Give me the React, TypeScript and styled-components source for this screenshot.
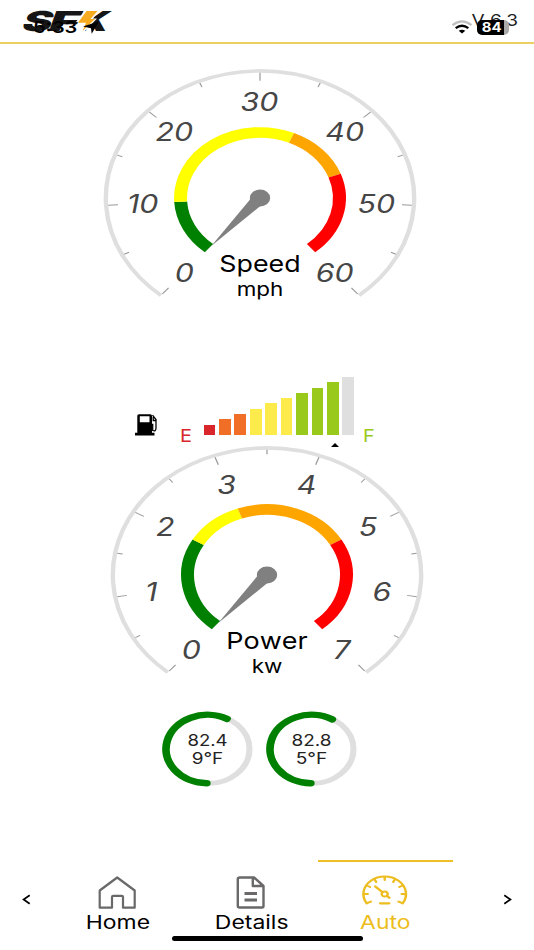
import React from 'react';
import styled, { createGlobalStyle } from 'styled-components';

const STRETCH = 1.213;

const GlobalStyle = createGlobalStyle`
  * { box-sizing: border-box; }
  body {
    margin: 0;
    background: #fff;
    font-family: Inter, Roboto, sans-serif;
    color: #000;
  }
`;

const Screen = styled.div`
  position: relative;
  width: 534px;
  height: 950px;
  overflow: hidden;
  display: flex;
  flex-direction: column;
  background: #fff;
`;

const Header = styled.header`
  position: relative;
  flex: none;
  height: 44px;
  border-bottom: 2px solid #ebcf62;
  display: flex;
  justify-content: space-between;
  padding: 8px 16px 0 18px;
`;

const Logo = styled.svg`
  width: 94px;
  height: 26px;
  overflow: visible;
`;

const Version = styled.span`
  font-size: 16px;
  line-height: 25px;
  color: #222;
  transform: scaleX(1.19);
  transform-origin: right center;
`;

const StatusBar = styled.div`
  position: absolute;
  inset: 18.5px 25px auto 33px;
  height: 17px;
  display: flex;
  align-items: center;
`;

const Clock = styled.span`
  width: 50px;
  font-size: 16.5px;
  line-height: 17px;
  font-weight: 600;
  white-space: nowrap;
  transform: scaleX(1.21);
  transform-origin: left center;
`;

const LocationArrow = styled.svg`
  width: 17px;
  height: 14px;
`;

const Wifi = styled.svg`
  width: 22px;
  height: 14px;
  margin-left: auto;
`;

const Battery = styled.div`
  width: 32px;
  height: 15px;
  margin-left: 4px;
  border-radius: 5px;
  background: linear-gradient(90deg, #000 0 84%, #aaa 84%);
  color: #fff;
  font-size: 13px;
  line-height: 15px;
  font-weight: 700;
  text-align: center;
  span { display: inline-block; transform: translateX(-1px) scaleX(1.15); }
`;

const Dashboard = styled.main`
  flex: 1;
  display: flex;
  flex-direction: column;
  align-items: flex-start;
`;

const GaugeSvg = styled.svg<{ $left: number; $top: number }>`
  flex: none;
  width: 320px;
  height: 240px;
  margin: ${p => p.$top}px 0 0 ${p => p.$left}px;
  text { text-anchor: middle; font-kerning: none; }
`;

const Fuel = styled.section`
  position: relative;
  width: 534px;
  height: 68px;
  margin-top: 69px;
  padding: 2px 0 8px 135px;
  display: flex;
  align-items: flex-end;
`;

const Pump = styled.svg`
  width: 23px;
  height: 22px;
  margin-bottom: -1px;
`;

const FuelMark = styled.span<{ $color: string; $before: number; $after: number }>`
  width: 12px;
  margin: 0 ${p => p.$after}px -10.5px ${p => p.$before}px;
  color: ${p => p.$color};
  font-size: 17.5px;
  line-height: 20px;
  transform: scaleX(1.14);
  transform-origin: left;
`;

const Bars = styled.div`
  display: flex;
  align-items: flex-end;
  gap: 3.7px;
`;

const Bar = styled.i<{ $height: number; $color: string }>`
  width: 11.75px;
  height: ${p => p.$height}px;
  background: ${p => p.$color};
`;

const Caret = styled.i`
  position: absolute;
  left: 331px;
  top: 68px;
  border: 4px solid transparent;
  border-top: 0;
  border-bottom: 4px solid #000;
`;

const Temps = styled.section`
  display: flex;
  gap: 13px;
  margin: 27.5px 0 0 162px;
`;

const TempRing = styled.svg`
  width: 91px;
  height: 76px;
  text { text-anchor: middle; font-size: 16px; fill: #222; }
`;

const Nav = styled.nav`
  position: relative;
  flex: none;
  height: 91px;
  display: grid;
  grid-template-columns: 52px repeat(3, 133.5px) 1fr 53px;
`;

const Chevron = styled.svg<{ $column: number }>`
  grid-column: ${p => p.$column};
  grid-row: 1;
  width: 9px;
  height: 11px;
  place-self: start center;
  margin-top: 35px;
`;

const Tab = styled.div<{ $active?: boolean }>`
  display: flex;
  flex-direction: column;
  align-items: center;
  margin-left: -1px;
  border-top: 2px solid ${p => (p.$active ? '#efbf28' : 'transparent')};
  margin-top: 0.5px;
  padding-top: 13px;
  color: ${p => (p.$active ? '#edbd20' : '#6a6868')};
`;

const TabIcon = styled.svg`
  width: 48px;
  height: 36px;
  overflow: visible;
`;

const TabLabel = styled.span<{ $active?: boolean }>`
  font-size: 18.5px;
  line-height: 23px;
  color: ${p => (p.$active ? '#edbd20' : '#000')};
  transform: scaleX(1.24);
`;

const HomeIndicator = styled.div`
  position: absolute;
  left: 171.5px;
  bottom: 9px;
  width: 191px;
  height: 5.5px;
  border-radius: 3px;
  background: #000;
`;

const point = (deg: number, r: number): [number, number] => {
  const a = (deg * Math.PI) / 180;
  return [Math.sin(a) * r, -Math.cos(a) * r];
};

const arc = (from: number, to: number, r: number) => {
  const [x1, y1] = point(from, r);
  const [x2, y2] = point(to, r);
  return `M${x1} ${y1}A${r} ${r} 0 ${to - from > 180 ? 1 : 0} 1 ${x2} ${y2}`;
};

interface Range { to: number; color: string }
interface GaugeProps {
  title: string; unit: string; max: number; step: number;
  ranges: Range[]; left: number; top: number;
}

function Gauge({ title, unit, max, step, ranges, left, top }: GaugeProps) {
  const angle = (v: number) => -140 + (v / max) * 280;
  const count = max / step;
  const ticks = Array.from({ length: count * 2 + 1 }, (_, i) => i);
  return (
    <GaugeSvg $left={left} $top={top} viewBox="-160 -132 320 240">
      <g transform={`scale(${STRETCH} 1)`}>
        <path d={arc(-140, 140, 127.1)} fill="none" stroke="#dfdfdf" strokeWidth="3.6" />
        {ticks.map(i => {
          const a = angle((i * step) / 2);
          const [x1, y1] = point(a, 125.3);
          const [x2, y2] = point(a, i % 2 ? 120.8 : 117.3);
          return <line key={i} x1={x1} y1={y1} x2={x2} y2={y2} stroke="#999" strokeWidth="1" />;
        })}
        {ranges.map((r, i) => (
          <path key={r.to} d={arc(angle(i ? ranges[i - 1].to : 0), angle(r.to), 65.5)}
            fill="none" stroke={r.color} strokeWidth="10.7" />
        ))}
        {Array.from({ length: count + 1 }, (_, i) => {
          const [x, y] = point(angle(i * step), 96.5);
          return (
            <text key={i} x={x - 0.4} y={y + 9.6} fontSize="25" fontStyle="italic" fill="#464646">
              {i * step}
            </text>
          );
        })}
        <circle r="8.4" fill="#808080" />
        <path d="M-6 0L0 -62.5L6 0Z" fill="#808080" transform="rotate(-140)" />
        <text y="74.4" fontSize="23.5" textLength="67" lengthAdjust="spacingAndGlyphs">{title}</text>
        <text y="98" fontSize="18.5">{unit}</text>
      </g>
    </GaugeSvg>
  );
}

function Temperature({ lines, end }: { lines: string[]; end: number }) {
  return (
    <TempRing viewBox="-45.5 -38 91 76">
      <g transform="scale(1.213 1)">
        <circle r="34.6" fill="none" stroke="#dfdfdf" strokeWidth="5" />
        <path d={arc(-179, end, 34.2)} fill="none" stroke="#008000" strokeWidth="6.4" strokeLinecap="round" />
        <text y="-3" textLength="33" lengthAdjust="spacingAndGlyphs">{lines[0]}</text>
        <text y="15.2" textLength="26" lengthAdjust="spacingAndGlyphs">{lines[1]}</text>
      </g>
    </TempRing>
  );
}

const fuelBars = [
  [10.7, '#d9262b'], [16, '#f06e26'], [21, '#f06e26'], [26.5, '#fdea4b'], [32, '#fdea4b'],
  [37, '#fdea4b'], [42.5, '#99c91b'], [47.7, '#99c91b'], [53, '#99c91b'], [58.2, '#dfdfdf'],
] as const;

const dialTicks = [-90, -60, -30, 0, 30, 60, 90];

export default function App() {
  return (
    <Screen>
      <GlobalStyle />
      <Header>
        <Logo viewBox="18 8 94 26">
          <g transform="translate(0 31) skewX(-20)" fontFamily="Inter" fontWeight="900" fontSize="27.5" fill="#161616">
            <text x="20" textLength="30" lengthAdjust="spacingAndGlyphs">S</text>
            <text x="46.5" textLength="31" lengthAdjust="spacingAndGlyphs">F</text>
            <text x="76" textLength="30" lengthAdjust="spacingAndGlyphs">K</text>
          </g>
          <path d="M74 32L80 22H76L85 10H99L93 18.5H97L84 32Z" fill="#fff" />
          <path d="M86.5 11H97.5L90.5 19H95L82.5 31L86 22.8H78Z" fill="#f6ab20" />
        </Logo>
        <Version>V 6.3</Version>
        <StatusBar>
          <Clock>5:33</Clock>
          <LocationArrow viewBox="0 0 17 14"><path d="M16.2 1.3L8.7 13.8L8 8.3L0 6.5Z" /></LocationArrow>
          <Wifi viewBox="0 0 22 14" fill="none">
            <path d="M1.5 5.2Q11 -2.5 20.5 5.2" stroke="#bfbfbf" strokeWidth="2.2" />
            <path d="M4.7 8.2Q11 3.3 17.3 8.2" stroke="#000" strokeWidth="2.3" />
            <path d="M7.7 10.7Q11 8.6 14.3 10.7L11 13.5Z" fill="#000" />
          </Wifi>
          <Battery><span>84</span></Battery>
        </StatusBar>
      </Header>

      <Dashboard>
        <Gauge title="Speed" unit="mph" max={60} step={10} left={100.2} top={22.2}
          ranges={[{ to: 10, color: '#008000' }, { to: 35, color: '#ffff00' }, { to: 45, color: '#ffa500' }, { to: 60, color: '#ff0000' }]} />
        <Fuel>
          <Pump viewBox="0 0 23 22">
            <path fillRule="evenodd" d="M2.3 1.8Q2.3 .3 4 .3H15.3Q17 .3 17 1.8V18.7H19.5V21.5H0V18.7H2.3ZM4.8 2.3V8.3H14.5V2.3Z" />
            <path d="M16 10.5H17.7V16.5Q20.8 18 21 14V5.5L17.5 1.2M18.2 3V6.5H21" fill="none" stroke="#000" strokeWidth="1.3" />
          </Pump>
          <FuelMark $color="#d9262b" $before={22} $after={11.5}>E</FuelMark>
          <Bars>
            {fuelBars.map(([height, color], i) => <Bar key={i} $height={height} $color={color} />)}
          </Bars>
          <FuelMark $color="#99c91b" $before={8.5} $after={0}>F</FuelMark>
          <Caret />
        </Fuel>
        <Gauge title="Power" unit="kw" max={7} step={1} left={106.7} top={-0.2}
          ranges={[{ to: 2, color: '#008000' }, { to: 3, color: '#ffff00' }, { to: 5, color: '#ffa500' }, { to: 7, color: '#ff0000' }]} />
        <Temps>
          <Temperature lines={['82.4', '9°F']} end={28} />
          <Temperature lines={['82.8', '5°F']} end={30} />
        </Temps>
      </Dashboard>

      <Nav>
        <Chevron $column={1} viewBox="0 0 9 11"><path d="M7.7 1.3L1.6 5.5L7.7 9.7" fill="none" stroke="#000" strokeWidth="1.7" /></Chevron>
        <Tab>
          <TabIcon viewBox="0 0 48 36" fill="none" stroke="currentColor" strokeWidth="2.2" strokeLinejoin="round">
            <path d="M5.7 15.5L23.2 2.5L40.7 15.5V32.7H29V22Q29 20.8 27.7 20.8H19.3Q18 20.8 18 22V32.7H5.7Z" />
          </TabIcon>
          <TabLabel>Home</TabLabel>
        </Tab>
        <Tab>
          <TabIcon viewBox="0 0 48 36" fill="none" stroke="currentColor" strokeWidth="2.4" strokeLinejoin="round">
            <path d="M12 2.5H26L35.5 11V31Q35.5 32.5 34 32.5H11.6Q9.8 32.5 9.8 31V4Q9.8 2.5 12 2.5ZM24.8 2.5V11H35.5" />
            <path d="M16.5 18.4H29M16.5 24.9H29" strokeWidth="3" />
          </TabIcon>
          <TabLabel>Details</TabLabel>
        </Tab>
        <Tab $active>
          <TabIcon viewBox="0 0 48 36" fill="none" stroke="currentColor" strokeWidth="2" strokeLinecap="round">
            <g transform="translate(23.7 19) scale(1.21 1)">
              <path d={arc(-122, 122, 17.6)} />
              <path d="M-14.6 9.2L-11.4 7.6M14.6 9.2L11.4 7.6" />
              {dialTicks.map(a => {
                const [x1, y1] = point(a, 17);
                const [x2, y2] = point(a, 14);
                return <line key={a} x1={x1} y1={y1} x2={x2} y2={y2} />;
              })}
              <circle r="2.5" />
              <path d="M-7.8 -7.5L-2 -2M2 2L3.8 3.8M-3.7 9.3H3.7" strokeWidth="2.2" />
            </g>
          </TabIcon>
          <TabLabel $active>Auto</TabLabel>
        </Tab>
        <Chevron $column={6} viewBox="0 0 9 11"><path d="M1.3 1.3L7.4 5.5L1.3 9.7" fill="none" stroke="#000" strokeWidth="1.7" /></Chevron>
        <HomeIndicator />
      </Nav>
    </Screen>
  );
}
